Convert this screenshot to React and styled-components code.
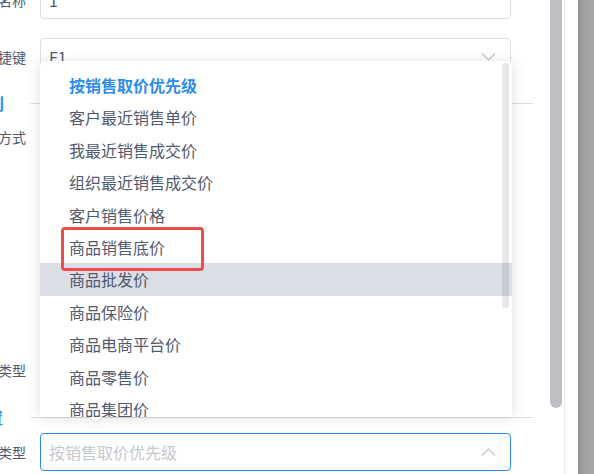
import React from 'react';
import styled, { createGlobalStyle } from 'styled-components';

const GlobalStyle = createGlobalStyle`
  html, body { margin: 0; padding: 0; background: #fff; }
  body { font-family: "Noto Sans CJK SC", "Noto Sans", sans-serif; }
`;

const Screen = styled.div`
  display: flex;
  width: 594px;
  height: 474px;
  overflow: hidden;
`;

const Drawer = styled.div`
  display: flex;
  width: 578px;
  background: #fff;
`;

const Body = styled.div`
  position: relative;
  width: 550px;
  height: 474px;
  overflow: hidden;
`;

const Form = styled.div`
  display: flex;
  flex-direction: column;
  width: 593px;
  margin-left: -60px;
  margin-top: -19px;
`;

const Item = styled.div`
  display: flex;
  align-items: flex-start;
  margin-top: ${p => p.$gap || 0}px;
`;

const Label = styled.div`
  width: 86px;
  padding-right: 14px;
  height: 38px;
  line-height: 38px;
  text-align: right;
  font-size: 14px;
  color: #515a6e;
  white-space: nowrap;
`;

const Control = styled.div`
  flex: 1;
  margin-right: 22px;
  min-height: ${p => p.$h || 38}px;
`;

const Input = styled.div`
  display: flex;
  align-items: center;
  justify-content: space-between;
  box-sizing: border-box;
  height: 38px;
  padding: 0 14px 0 8px;
  border: 1px solid ${p => (p.$focus ? '#2d8cf0' : '#dcdee2')};
  border-radius: 4px;
  font-size: 16px;
  color: ${p => (p.$placeholder ? '#c5c8ce' : '#515a6e')};
  background: #fff;
`;

const Section = styled.div`
  display: flex;
  align-items: center;
  height: 16px;
  margin-top: ${p => p.$gap || 0}px;
`;

const SectionTitle = styled.div`
  display: flex;
  justify-content: flex-end;
  width: 90px;
  flex-shrink: 0;
  box-sizing: border-box;
  padding-right: ${p => p.$pad}px;
  font-size: 16px;
  line-height: 16px;
  font-weight: 700;
  color: #2d8cf0;
  white-space: nowrap;
`;

const Rule = styled.div`
  flex: 1;
  height: 1px;
  background: #dcdee2;
`;

const Dropdown = styled.div`
  position: absolute;
  left: 40px;
  top: 61px;
  width: 472px;
  height: 356px;
  box-sizing: border-box;
  padding-top: 8px;
  background: #fff;
  border-radius: 4px 4px 0 0;
  box-shadow: 0 1px 14px rgba(0, 0, 0, 0.13), 0 1px 0 #dcdee2;
  overflow: hidden;
  z-index: 2;
`;

const Option = styled.div`
  height: 32.4px;
  line-height: 32.4px;
  padding-left: 29px;
  font-size: 16px;
  font-weight: ${p => (p.$group ? 700 : 400)};
  color: ${p => (p.$group ? '#2d8cf0' : '#515a6e')};
  background: ${p => (p.$hover ? '#dcdee6' : 'transparent')};
  white-space: nowrap;
`;

const InnerThumb = styled.div`
  position: absolute;
  left: 462px;
  top: 2px;
  width: 7px;
  height: 245px;
  border-radius: 4px;
  background: rgba(0, 0, 0, 0.09);
`;

const Arrow = styled.div`
  position: absolute;
  left: 90px;
  top: 417px;
  width: 0;
  height: 0;
  border-left: 6px solid transparent;
  border-right: 6px solid transparent;
  border-top: 5px solid #fff;
  filter: drop-shadow(0 1px 1px rgba(0, 0, 0, 0.12));
  z-index: 3;
`;

const Highlight = styled.div`
  position: absolute;
  left: 61px;
  top: 227px;
  width: 143px;
  height: 44px;
  box-sizing: border-box;
  border: 3px solid #ef4a4e;
  border-radius: 4px;
  z-index: 4;
`;

const Track = styled.div`
  width: 14px;
  border-right: 1px solid #e8eaec;
`;

const Thumb = styled.div`
  width: 12px;
  height: 408px;
  background: #bdbfc3;
  border-radius: 0 0 6px 6px;
`;

const Mask = styled.div`
  width: 16px;
  background: linear-gradient(to right, #8f8f8f, #a3a3a3 45%, #a7a7a7);
`;

const Chevron = ({ up }) => (
  <svg width="15" height="8" viewBox="0 0 15 8">
    <polyline
      points={up ? '1,7.5 7.5,1 14,7.5' : '1,0.5 7.5,7 14,0.5'}
      fill="none"
      stroke="#c5c8ce"
      strokeWidth="1.3"
    />
  </svg>
);

const options = [
  '客户最近销售单价',
  '我最近销售成交价',
  '组织最近销售成交价',
  '客户销售价格',
  '商品销售底价',
  '商品批发价',
  '商品保险价',
  '商品电商平台价',
  '商品零售价',
  '商品集团价',
];

export default function App() {
  return (
    <Screen>
      <GlobalStyle />
      <Drawer>
        <Body>
          <Form>
            <Item>
              <Label>模板名称</Label>
              <Control>
                <Input>1</Input>
              </Control>
            </Item>
            <Item $gap={19}>
              <Label>快捷键</Label>
              <Control>
                <Input>
                  F1
                  <Chevron />
                </Input>
              </Control>
            </Item>
            <Section $gap={19}>
              <SectionTitle $pad={26}>取价规则</SectionTitle>
              <Rule />
            </Section>
            <Item $gap={7}>
              <Label>取价方式</Label>
              <Control $h={233} />
            </Item>
            <Item>
              <Label>价格类型</Label>
              <Control>
                <Input />
              </Control>
            </Item>
            <Section $gap={20}>
              <SectionTitle $pad={27}>其他设置</SectionTitle>
              <Rule />
            </Section>
            <Item $gap={8}>
              <Label>取价类型</Label>
              <Control>
                <Input $focus $placeholder>
                  按销售取价优先级
                  <Chevron up />
                </Input>
              </Control>
            </Item>
          </Form>
          <Dropdown>
            <Option $group>按销售取价优先级</Option>
            {options.map((o, i) => (
              <Option key={o} $hover={i === 5}>
                {o}
              </Option>
            ))}
            <InnerThumb />
          </Dropdown>
          <Arrow />
          <Highlight />
        </Body>
        <Track>
          <Thumb />
        </Track>
      </Drawer>
      <Mask />
    </Screen>
  );
}
